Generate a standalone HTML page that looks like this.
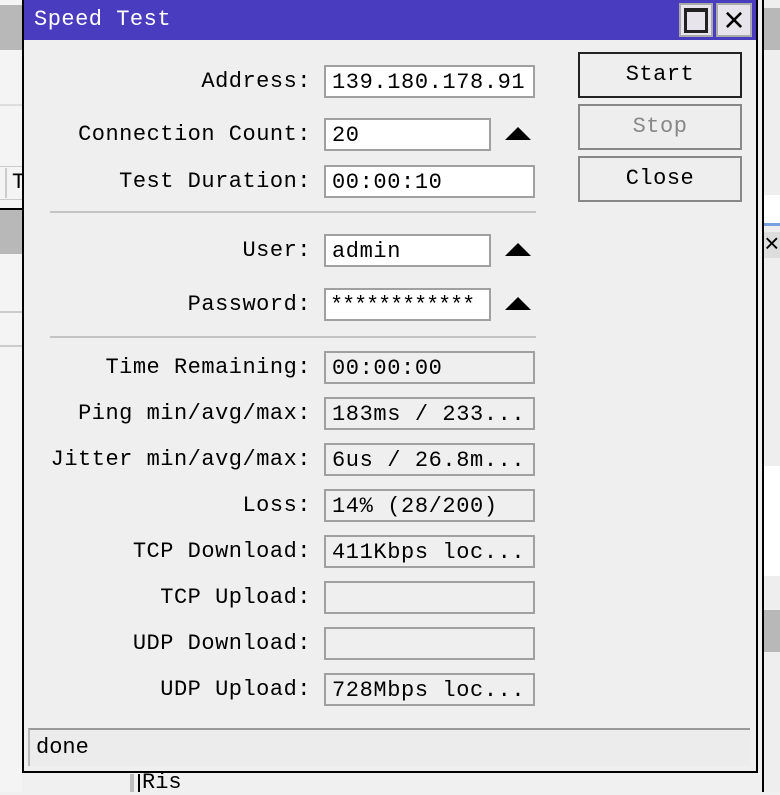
<!DOCTYPE html>
<html><head><meta charset="utf-8"><style>
*{margin:0;padding:0;box-sizing:border-box}
body{width:780px;height:792px;overflow:hidden;background:#f0f0f0;position:relative;font-family:"Liberation Mono",monospace;font-size:22px;color:#000}
.a{position:absolute}
.lbl{position:absolute;right:469px;height:33px;line-height:33px;white-space:nowrap;letter-spacing:0.5px}
.f{position:absolute;left:324px;height:33px;line-height:31px;padding-left:6px;border:2px solid #a0a0a0;background:#fff;white-space:nowrap;letter-spacing:0.6px;overflow:hidden}
.ro{background:#efefef;width:211px}
.tri{position:absolute;left:505px;width:0;height:0;border-left:13px solid transparent;border-right:13px solid transparent;border-bottom:13px solid #000}
.btn{position:absolute;left:578px;width:164px;height:46px;border:2px solid #888;background:#eee;text-align:center;line-height:42px;letter-spacing:0.5px}
.sep{position:absolute;left:50px;width:486px;height:2px;background:#c4c4c4}
</style></head><body>
<div class="a" style="left:0;top:0;width:22px;height:792px;background:#f4f4f4"></div>
<div class="a" style="left:0;top:5px;width:22px;height:45px;background:#b8b8b8"></div>
<div class="a" style="left:0;top:104px;width:22px;height:2px;background:#ddd"></div>
<div class="a" style="left:0;top:166px;width:22px;height:34px;border-top:1px solid #ccc;border-bottom:1px solid #ccc"></div>
<div class="a" style="left:5px;top:168px;width:2px;height:30px;background:#ccc"></div>
<div class="a" style="left:12px;top:170px;font-size:22px">T</div>
<div class="a" style="left:0;top:208px;width:22px;height:2px;background:#000"></div>
<div class="a" style="left:0;top:210px;width:22px;height:44px;background:#b8b8b8"></div>
<div class="a" style="left:0;top:311px;width:22px;height:2px;background:#ccc"></div>
<div class="a" style="left:0;top:345px;width:22px;height:2px;background:#ccc"></div>
<div class="a" style="left:757px;top:0;width:23px;height:792px;background:#f0f0f0"></div>
<div class="a" style="left:762px;top:0;width:18px;height:792px;border-left:2px solid #000;background:#eee"></div>
<div class="a" style="left:764px;top:8px;width:16px;height:42px;background:#b8b8b8"></div>
<div class="a" style="left:764px;top:195px;width:16px;height:28px;background:#fff"></div>
<div class="a" style="left:764px;top:223px;width:16px;height:3px;background:#7aa0e0"></div>
<div class="a" style="left:764px;top:232px;width:16px;height:26px;background:#ddd;font-size:26px;line-height:26px">×</div>
<div class="a" style="left:764px;top:466px;width:16px;height:2px;background:#000"></div>
<div class="a" style="left:764px;top:466px;width:16px;height:110px;background:#fff"></div>
<div class="a" style="left:764px;top:610px;width:16px;height:42px;background:#b8b8b8"></div>
<div class="a" style="left:130px;top:774px;width:4px;height:18px;background:#bbb"></div>
<div class="a" style="left:138px;top:774px;width:2px;height:18px;background:#000"></div>
<div class="a" style="left:142px;top:772px;font-size:22px;line-height:22px">Ris</div>
<div class="a" style="left:22px;top:0;width:736px;height:773px;border:2px solid #000;border-top:none;background:#efefef"></div>
<div class="a" style="left:24px;top:0;width:732px;height:40px;background:#4a3cbf"></div>
<div class="a" style="left:34px;top:6px;color:#fff;font-size:22px;line-height:28px;letter-spacing:0.5px">Speed Test</div>
<div class="a" style="left:679px;top:3px;width:34px;height:34px;background:#e8e4ec;border:2px solid #aaa"><div style="margin:3px;width:24px;height:25px;border:3px solid #222;border-top-width:4px"></div></div>
<div class="a" style="left:716px;top:3px;width:36px;height:34px;background:#e8e4ec;border:2px solid #aaa;text-align:center;line-height:30px;font-family:'Liberation Sans',sans-serif;font-size:36px">×</div>

<div class="lbl" style="top:65px">Address:</div>
<div class="f" style="top:65px;width:211px">139.180.178.91</div>
<div class="lbl" style="top:118px">Connection Count:</div>
<div class="f" style="top:118px;width:167px">20</div>
<div class="tri" style="top:127px"></div>
<div class="lbl" style="top:165px">Test Duration:</div>
<div class="f" style="top:165px;width:211px">00:00:10</div>
<div class="sep" style="top:211px"></div>
<div class="lbl" style="top:234px">User:</div>
<div class="f" style="top:234px;width:167px">admin</div>
<div class="tri" style="top:243px"></div>
<div class="lbl" style="top:288px">Password:</div>
<div class="f" style="top:288px;width:167px;letter-spacing:-1.2px;padding-left:4px">************</div>
<div class="tri" style="top:297px"></div>
<div class="sep" style="top:336px"></div>

<div class="lbl" style="top:351px">Time Remaining:</div><div class="f ro" style="top:351px">00:00:00</div>
<div class="lbl" style="top:397px">Ping min/avg/max:</div><div class="f ro" style="top:397px">183ms / 233...</div>
<div class="lbl" style="top:443px">Jitter min/avg/max:</div><div class="f ro" style="top:443px">6us / 26.8m...</div>
<div class="lbl" style="top:489px">Loss:</div><div class="f ro" style="top:489px">14% (28/200)</div>
<div class="lbl" style="top:535px">TCP Download:</div><div class="f ro" style="top:535px">411Kbps loc...</div>
<div class="lbl" style="top:581px">TCP Upload:</div><div class="f ro" style="top:581px"></div>
<div class="lbl" style="top:627px">UDP Download:</div><div class="f ro" style="top:627px"></div>
<div class="lbl" style="top:673px">UDP Upload:</div><div class="f ro" style="top:673px">728Mbps loc...</div>

<div class="btn" style="top:52px;border-color:#222">Start</div>
<div class="btn" style="top:104px;color:#888">Stop</div>
<div class="btn" style="top:156px">Close</div>

<div class="a" style="left:28px;top:728px;width:722px;height:38px;border-top:2px solid #999;border-left:2px solid #bbb;background:#ececec;line-height:36px;padding-left:6px">done</div>
</body></html>
